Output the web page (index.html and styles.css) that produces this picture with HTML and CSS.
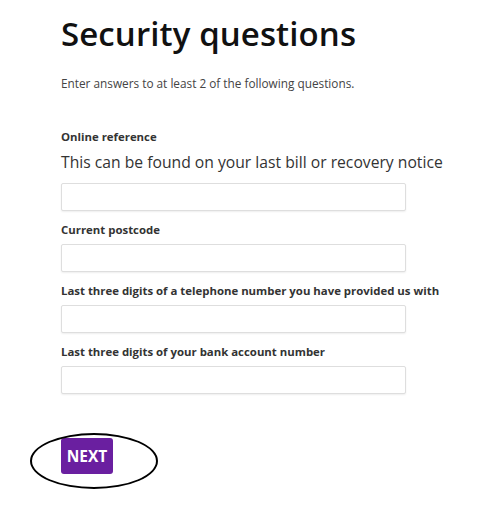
FILE: index.html
```html
<!DOCTYPE html>
<html lang="en">
<head>
<meta charset="utf-8">
<title>Security questions</title>
<link rel="stylesheet" href="styles.css">
</head>
<body>
<main class="page">
  <h1 class="title">Security questions</h1>
  <p class="intro">Enter answers to at least 2 of the following questions.</p>
  <form class="form">
    <div class="field first">
      <label class="label" for="ref">Online reference</label>
      <p class="hint">This can be found on your last bill or recovery notice</p>
      <input class="input" id="ref" type="text">
    </div>
    <div class="field">
      <label class="label" for="pc">Current postcode</label>
      <input class="input" id="pc" type="text">
    </div>
    <div class="field">
      <label class="label" for="tel">Last three digits of a telephone number you have provided us with</label>
      <input class="input" id="tel" type="text">
    </div>
    <div class="field">
      <label class="label" for="bank">Last three digits of your bank account number</label>
      <input class="input" id="bank" type="text">
    </div>
    <div class="actions">
      <button class="next" type="button">NEXT</button>
      <span class="circle"></span>
    </div>
  </form>
</main>
</body>
</html>
```
FILE: styles.css
```css
* { box-sizing: border-box; }
html, body { margin: 0; padding: 0; background: #fff; }
body { font-family: "Open Sans", "Noto Sans", sans-serif; color: #222; }
.page { padding: 11px 0 0 61px; width: 487px; }
.title {
  margin: 0;
  font-size: 33px;
  font-weight: 600;
  line-height: 45px;
  color: #111;
  letter-spacing: 0.1px;
}
.intro {
  margin: 19px 0 0;
  font-size: 11.8px;
  line-height: 16px;
  color: #444;
}
.form { display: flex; flex-direction: column; }
.field { display: flex; flex-direction: column; margin-top: 11px; }
.field.first { margin-top: 38px; }
.label {
  font-size: 11.4px;
  font-weight: 700;
  line-height: 16px;
  color: #333;
  margin-bottom: 6px;
}
.hint {
  margin: 0 0 10px;
  font-size: 15.7px;
  line-height: 22px;
  color: #333;
}
.input {
  width: 345px;
  height: 28px;
  border: 1px solid #dedede;
  border-radius: 2px;
  box-shadow: 0 1px 2px rgba(0,0,0,0.07);
  background: #fff;
  margin: 0;
}
.actions { position: relative; margin-top: 44px; height: 60px; }
.next {
  width: 52px;
  height: 36px;
  background: #6a1fa0;
  color: #fff;
  border: 0;
  border-radius: 3px;
  font-family: "Open Sans", sans-serif;
  font-weight: 700;
  font-size: 15.5px;
  padding: 0;
}
.circle {
  position: absolute;
  left: -31px;
  top: -5px;
  width: 128px;
  height: 56px;
  border: 2px solid #000;
  border-radius: 50%;
}
```
